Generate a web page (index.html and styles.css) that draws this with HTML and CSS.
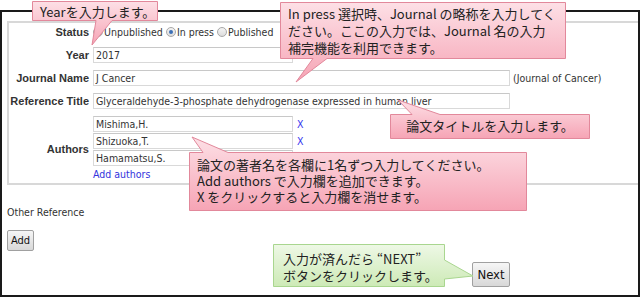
FILE: index.html
```html
<!DOCTYPE html>
<html lang="ja">
<head>
<meta charset="utf-8">
<title>Reference</title>
<link rel="stylesheet" href="styles.css">
</head>
<body>
<div class="frame">
  <div class="panel">
    <div class="form">
      <div class="label">Status</div>
      <div class="radios">
        <label class="radio"><span class="dot"></span>Unpublished</label>
        <label class="radio"><span class="dot on"></span>In press</label>
        <label class="radio"><span class="dot"></span>Published</label>
      </div>
      <div class="label">Year</div>
      <div class="field"><span class="input short">2017</span></div>
      <div class="label">Journal Name</div>
      <div class="field"><span class="input long">J Cancer</span><span class="note">(Journal of Cancer)</span></div>
      <div class="label">Reference Title</div>
      <div class="field"><span class="input long">Glyceraldehyde-3-phosphate dehydrogenase expressed in human liver</span></div>
      <div class="label">Authors</div>
      <div class="authors">
        <div class="author"><span class="input short">Mishima,H.</span><a class="del">X</a></div>
        <div class="author"><span class="input short">Shizuoka,T.</span><a class="del">X</a></div>
        <div class="author"><span class="input short">Hamamatsu,S.</span><a class="del">X</a></div>
        <a class="add-link">Add authors</a>
      </div>
    </div>
  </div>
  <div class="other">Other Reference</div>
  <div class="btn add">Add</div>
  <div class="btn next">Next</div>
</div>

<svg class="shapes" width="640" height="298" viewBox="0 0 640 298">
  <defs>
    <linearGradient id="pink" x1="0" y1="0" x2="0" y2="1">
      <stop offset="0" stop-color="#fde0e6"/>
      <stop offset="1" stop-color="#f6a4b5"/>
    </linearGradient>
    <linearGradient id="green" x1="0" y1="0" x2="0" y2="1">
      <stop offset="0" stop-color="#eef8e6"/>
      <stop offset="1" stop-color="#cdeab6"/>
    </linearGradient>
  </defs>
  <path class="pk" d="M32.5 1.5 H157.5 V20.5 H112 L92 45 L96 20.5 H32.5 Z"/>
  <path class="pk" d="M280.5 2.5 H565.5 V58.5 H327 L296 82 L313 58.5 H280.5 Z"/>
  <path class="pk" d="M390.5 114.5 H412 L398 100 L440 114.5 H589.5 V138.5 H390.5 Z"/>
  <path class="pk" d="M189.5 152.5 H203 L192 137 L228 152.5 H526.5 V210.5 H189.5 Z"/>
  <path class="gr" d="M273.5 244.5 H444.5 V260 L473 276 L444.5 279 V286.5 H273.5 Z"/>
</svg>

<div class="tip t1">Yearを入力します。</div>
<div class="tip t2">In press 選択時、Journal の略称を入力してく<br>ださい。ここの入力では、Journal 名の入力<br>補完機能を利用できます。</div>
<div class="tip t3">論文タイトルを入力します。</div>
<div class="tip t4">論文の著者名を各欄に1名ずつ入力してください。<br>Add authors で入力欄を追加できます。<br>X をクリックすると入力欄を消せます。</div>
<div class="tip t5">入力が済んだら “NEXT”<br>ボタンをクリックします。</div>
</body>
</html>
```
FILE: styles.css
```css
* { box-sizing: border-box; }
html, body { margin: 0; padding: 0; background: #fff; }
body {
  width: 640px;
  height: 298px;
  position: relative;
  overflow: hidden;
  font-family: "DejaVu Sans Condensed", "DejaVu Sans", sans-serif;
  font-size: 10.5px;
  color: #333;
}
.frame {
  margin-top: 10px;
  width: 640px;
  height: 287px;
  border: 2px solid #1a1a1a;
  padding: 9px 0 0 5px;
  overflow: hidden;
}
.panel {
  border: 2px solid #d8d8d8;
  margin-right: -20px;
  height: 164px;
  padding: 1px 0 0 0;
}
.form {
  display: grid;
  grid-template-columns: 80px 1fr;
  column-gap: 4px;
  row-gap: 7px;
  align-items: center;
}
.label {
  font-family: "Liberation Sans", Arial, sans-serif;
  font-size: 11px;
  font-weight: bold;
  text-align: right;
  white-space: nowrap;
  color: #333;
  line-height: 15px;
}
.radios { display: flex; align-items: center; height: 16px; }
.radio { display: flex; align-items: center; margin-right: 3px; }
.dot {
  width: 10px; height: 10px;
  border-radius: 50%;
  border: 1px solid #a8a8a8;
  background: linear-gradient(#f4f4f4, #dcdcdc);
  margin-right: 1px;
  position: relative;
}
.dot.on::after {
  content: "";
  position: absolute;
  left: 2px; top: 2px;
  width: 4px; height: 4px;
  border-radius: 50%;
  background: #3b6fb6;
}
.field { display: flex; align-items: center; }
.input {
  display: block;
  height: 16px;
  line-height: 14px;
  border: 1px solid #d9d9d9;
  border-top-color: #c8c8c8;
  background: #fff;
  padding: 0 2px;
  color: #333;
  white-space: nowrap;
  overflow: hidden;
}
.short { width: 200px; }
.long { width: 417px; }
.note { margin-left: 3px; }
.authors { display: flex; flex-direction: column; margin-top: -1px; }
.author { display: flex; align-items: center; height: 17px; }
.del { color: #3333ee; margin-left: 4px; }
.add-link { color: #3333dd; line-height: 15px; margin-top: 1px; }
.other { margin-top: 20px; line-height: 14px; }
.btn {
  display: inline-flex;
  align-items: center;
  justify-content: center;
  border: 1px solid #a0a0a0;
  border-radius: 2px;
  background: linear-gradient(#f6f6f6, #d8d8d8);
  color: #111;
}
.add { margin-top: 11px; width: 27px; height: 21px; font-size: 11px; }
.next {
  display: flex;
  margin-top: 11px;
  margin-left: 465px;
  width: 38px; height: 25px;
  font-size: 13px;
  font-family: "DejaVu Sans Condensed", "DejaVu Sans", sans-serif;
}
.shapes { position: absolute; left: 0; top: 0; pointer-events: none; }
.pk { fill: url(#pink); stroke: #e2889b; stroke-width: 1; }
.gr { fill: url(#green); stroke: #a9d68f; stroke-width: 1; }
.tip {
  position: absolute;
  font-family: "Noto Sans CJK JP", "Noto Sans", sans-serif;
  font-size: 13px;
  line-height: 17px;
  color: #222;
  white-space: nowrap;
}
.t1 { left: 40px; top: 3px; }
.t2 { left: 288px; top: 5px; }
.t3 { left: 390px; top: 117px; width: 200px; text-align: center; }
.t4 { left: 197px; top: 157px; line-height: 16px; }
.t5 { left: 283px; top: 250px; }
```
